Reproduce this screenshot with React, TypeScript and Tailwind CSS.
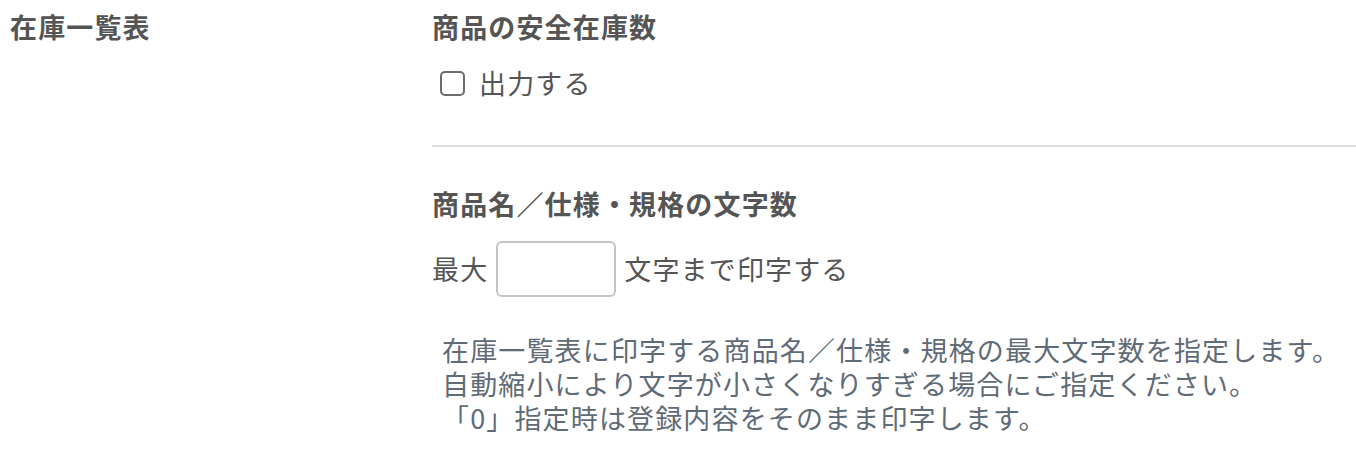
export default function App() {
  return (
    <div className="flex w-[1356px] h-[466px] bg-white text-[#555] font-['Noto_Sans_CJK_JP','Noto_Sans',sans-serif] text-[27px] tracking-[1.15px]">
      {/* label column */}
      <div className="w-[432px] shrink-0 pl-[10px] pt-[10px]">
        <h2 className="font-bold leading-[34px]">在庫一覧表</h2>
      </div>

      {/* settings column */}
      <div className="flex-1">
        <section className="pt-[10px]">
          <h3 className="font-bold leading-[34px]">商品の安全在庫数</h3>
          <label className="mt-[22px] flex items-center gap-[14px] pl-[8px] leading-[34px]">
            <input
              type="checkbox"
              className="appearance-none w-[25px] h-[25px] rounded-[5px] border-2 border-[#6b6b6b] bg-white"
            />
            <span>出力する</span>
          </label>
        </section>

        <div className="mt-[45px] border-t-2 border-[#d9dde1]" />

        <section className="pt-[40px]">
          <h3 className="font-bold leading-[34px]">商品名／仕様・規格の文字数</h3>
          <div className="mt-[20px] flex items-center gap-[8px]">
            <span>最大</span>
            <input
              type="text"
              className="w-[120px] h-[56px] rounded-[6px] border-2 border-[#c4c4c4] bg-white px-2 outline-none"
            />
            <span>文字まで印字する</span>
          </div>
          <div className="mt-[36px] pl-[10px] text-[#5f6b76] leading-[34px]">
            <p>在庫一覧表に印字する商品名／仕様・規格の最大文字数を指定します。</p>
            <p>自動縮小により文字が小さくなりすぎる場合にご指定ください。</p>
            <p>「0」指定時は登録内容をそのまま印字します。</p>
          </div>
        </section>
      </div>
    </div>
  );
}
